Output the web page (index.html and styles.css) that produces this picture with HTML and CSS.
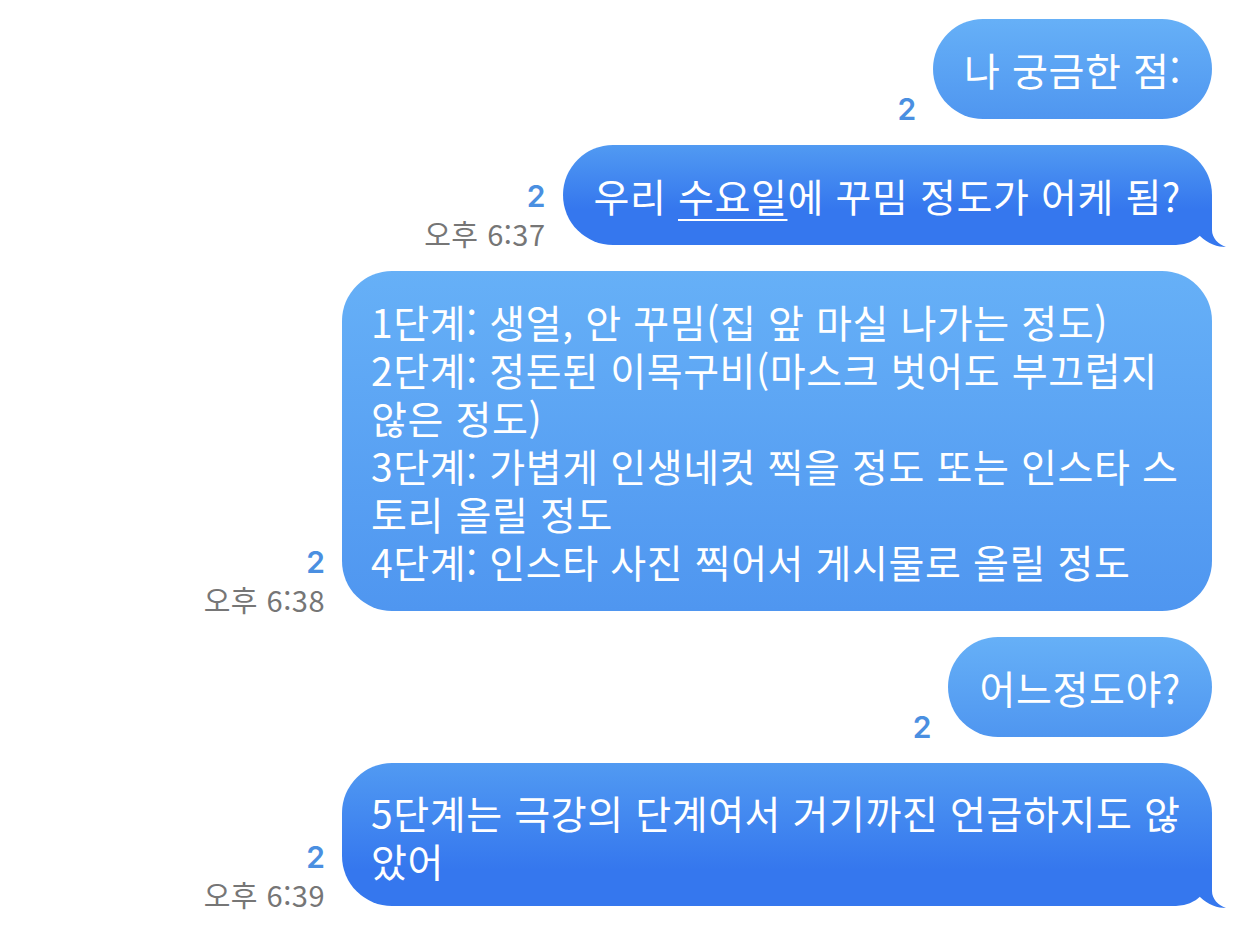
FILE: index.html
```html
<!DOCTYPE html>
<html lang="ko">
<head>
  <meta charset="UTF-8" />
  <meta name="viewport" content="width=device-width, initial-scale=1.0"/>
  <title>메시지</title>
  <link rel="stylesheet" href="styles.css">
</head>
<body>
  <div class="chat">
    <div class="row">
      <div class="meta">
        <span class="unread">2</span>
      </div>
      <div class="bubble light">나 궁금한 점:</div>
    </div>

    <div class="row">
      <div class="meta">
        <span class="unread">2</span>
        <span class="time">오후 6:37</span>
      </div>
      <div class="bubble dark">
        우리 <u>수요일</u>에 꾸밈 정도가 어케 됨?
        <svg class="tail" viewBox="0 0 40 40" width="40" height="40"><path d="M24 0 L24 21 C24 29 30 35 38 38 C30 38 20 35 12 27 L12 0 Z"/></svg>
      </div>
    </div>

    <div class="row">
      <div class="meta">
        <span class="unread">2</span>
        <span class="time">오후 6:38</span>
      </div>
      <div class="bubble light wide">
        1단계: 생얼, 안 꾸밈(집 앞 마실 나가는 정도)<br>
        2단계: 정돈된 이목구비(마스크 벗어도 부끄럽지<br>
        않은 정도)<br>
        3단계: 가볍게 인생네컷 찍을 정도 또는 인스타 스<br>
        토리 올릴 정도<br>
        4단계: 인스타 사진 찍어서 게시물로 올릴 정도
      </div>
    </div>

    <div class="row">
      <div class="meta">
        <span class="unread">2</span>
      </div>
      <div class="bubble light">어느정도야?</div>
    </div>

    <div class="row">
      <div class="meta">
        <span class="unread">2</span>
        <span class="time">오후 6:39</span>
      </div>
      <div class="bubble dark wide two">
        5단계는 극강의 단계여서 거기까진 언급하지도 않<br>
        았어
        <svg class="tail" viewBox="0 0 40 40" width="40" height="40"><path d="M24 0 L24 21 C24 29 30 35 38 38 C30 38 20 35 12 27 L12 0 Z"/></svg>
      </div>
    </div>
  </div>
</body>
</html>
```

FILE: styles.css
```css
* { box-sizing: border-box; }

body {
  margin: 0;
  background: #ffffff;
  font-family: 'Noto Sans CJK KR', 'Noto Sans', sans-serif;
}

.chat {
  display: flex;
  flex-direction: column;
  align-items: flex-end;
  gap: 26px;
  padding: 19px 30px 30px 0;
}

.row {
  display: flex;
  align-items: flex-end;
  gap: 17px;
}

.meta {
  display: flex;
  flex-direction: column;
  align-items: flex-end;
}

.unread {
  font-family: Inter, 'Noto Sans', sans-serif;
  font-weight: 600;
  font-size: 30px;
  line-height: 20px;
  color: #4a8fe1;
}

.time {
  font-family: 'Noto Sans CJK KR', sans-serif;
  font-size: 29px;
  line-height: 24px;
  letter-spacing: 0.5px;
  margin-top: 15px;
  color: #767676;
}

.bubble {
  position: relative;
  max-width: 870px;
  padding: 26px 31px;
  border-radius: 50px;
  font-size: 39px;
  line-height: 48px;
  letter-spacing: 0.6px;
  color: #ffffff;
  white-space: nowrap;
}

.bubble.wide {
  width: 870px;
  padding-left: 29px;
}

.bubble.two {
  padding-top: 25px;
  padding-bottom: 22px;
}

.bubble.light {
  background: linear-gradient(#66b0f7, #4f96f0);
}

.bubble.dark {
  background: linear-gradient(#519af2, #3577ee calc(100% - 36px), #3577ee);
  border-bottom-right-radius: 36px;
}

.bubble u {
  text-decoration-thickness: 2px;
  text-underline-offset: 7px;
}

.tail {
  position: absolute;
  right: -16px;
  bottom: -4px;
  fill: #3577ee;
}
```
